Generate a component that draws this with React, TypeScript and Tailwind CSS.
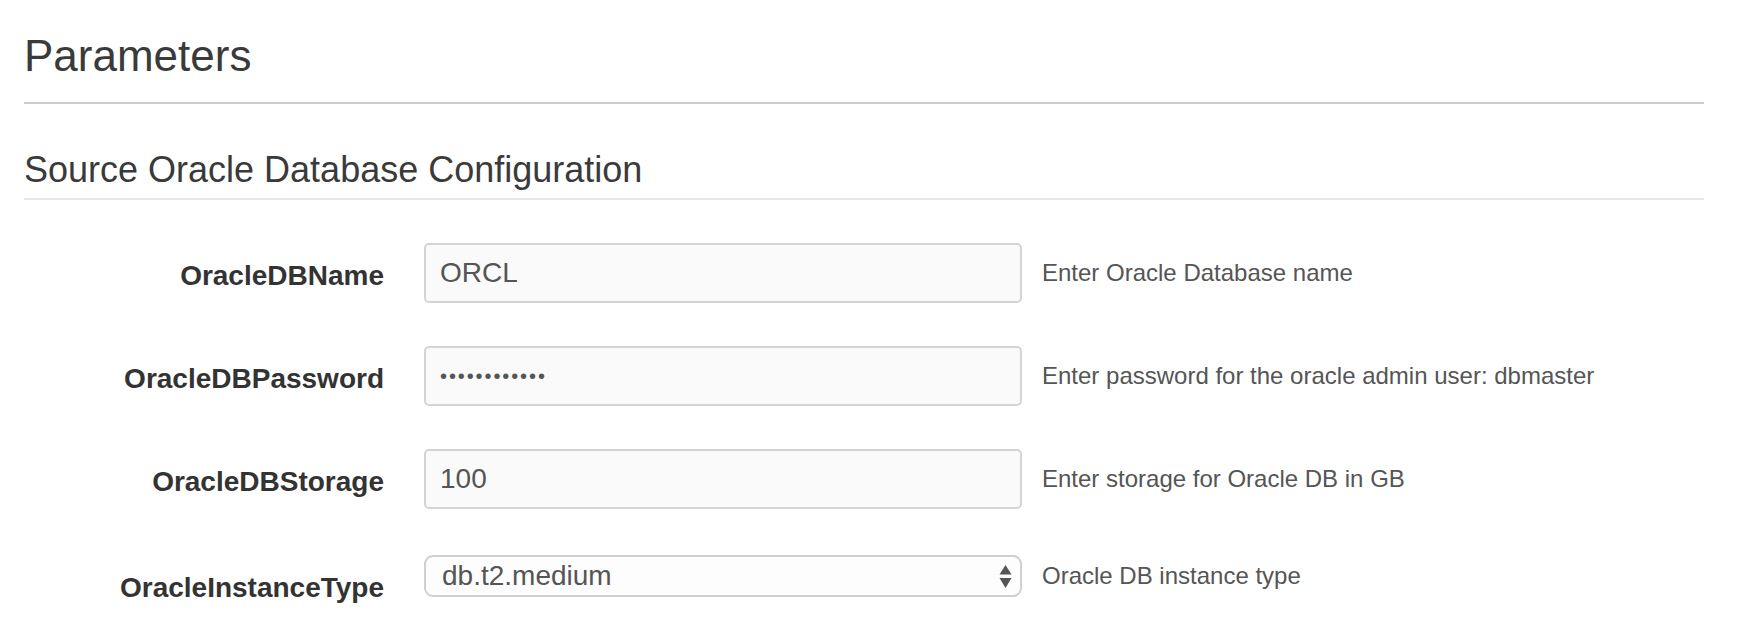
import React from "react";

const font = { fontFamily: '"Liberation Sans", Arial, Helvetica, sans-serif' };

function Row({
  label,
  control,
  help,
  className,
}: {
  label: string;
  control: React.ReactNode;
  help: string;
  className: string;
}) {
  return (
    <div className={"flex items-start " + className}>
      <div className="w-[360px] shrink-0 pt-[17px] text-right text-[28px] leading-[32px] font-bold text-[#333]">
        {label}
      </div>
      <div className="ml-[40px] flex items-center">
        {control}
        <div className="ml-[20px] text-[24px] leading-[28px] text-[#555]">{help}</div>
      </div>
    </div>
  );
}

function TextBox({ children }: { children: React.ReactNode }) {
  return (
    <div className="flex h-[60px] w-[598px] shrink-0 items-center rounded-[5px] border-2 border-[#d4d4d4] bg-[#fafafa] px-[14px] text-[28px] text-[#555]">
      {children}
    </div>
  );
}

export default function App() {
  return (
    <div className="min-h-[644px] bg-white pl-[24px] pr-[34px]" style={font}>
      <h1 className="pt-[32px] text-[44px] leading-[48px] font-normal text-[#3a3a3a]">Parameters</h1>
      <div className="mt-[22px] h-[2px] bg-[#cccccc]" />
      <h2 className="mt-[46px] text-[36px] leading-[40px] font-normal text-[#3a3a3a]">
        Source Oracle Database Configuration
      </h2>
      <div className="mt-[8px] h-[2px] bg-[#e6e6e6]" />

      <Row
        className="mt-[43px]"
        label="OracleDBName"
        control={<TextBox>ORCL</TextBox>}
        help="Enter Oracle Database name"
      />

      <Row
        className="mt-[43px]"
        label="OracleDBPassword"
        control={
          <TextBox>
            <span className="text-[20px] leading-[20px] tracking-[1.9px] text-[#555]">••••••••••••</span>
          </TextBox>
        }
        help="Enter password for the oracle admin user: dbmaster"
      />

      <Row
        className="mt-[43px]"
        label="OracleDBStorage"
        control={<TextBox>100</TextBox>}
        help="Enter storage for Oracle DB in GB"
      />

      <Row
        className="mt-[46px]"
        label="OracleInstanceType"
        control={
          <div className="flex h-[42px] w-[598px] shrink-0 items-center justify-between rounded-[9px] border-2 border-[#d0d0d0] bg-[#fdfdfd] pl-[16px] pr-[8px] text-[28px] text-[#555]">
            <span>db.t2.medium</span>
            <svg width="13" height="25" viewBox="0 0 13 25" aria-hidden="true">
              <polygon points="6.5,1 12.5,10.5 0.5,10.5" fill="#555" />
              <polygon points="0.5,14 12.5,14 6.5,24" fill="#555" />
            </svg>
          </div>
        }
        help="Oracle DB instance type"
      />
    </div>
  );
}
